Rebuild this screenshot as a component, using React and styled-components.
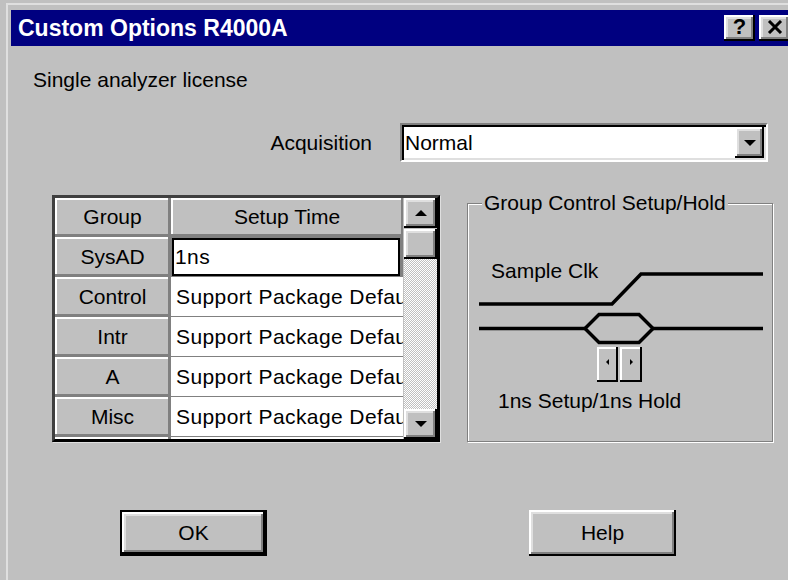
import React from 'react';
import styled, { createGlobalStyle, css } from 'styled-components';

const GlobalStyle = createGlobalStyle`
  html, body {
    margin: 0;
    padding: 0;
    background: #c0c0c0;
    overflow: hidden;
  }
  body {
    font-family: "Liberation Sans", Arial, sans-serif;
    font-size: 21px;
    color: #000;
  }
`;

// classic 3d bevels
const raised = css`
  background: #c0c0c0;
  box-shadow: inset -2px -2px 0 #000, inset 2px 2px 0 #fff, inset -4px -4px 0 #808080,
    inset 4px 4px 0 #dfdfdf;
`;

const raisedSoft = css`
  background: #c0c0c0;
  box-shadow: inset -2px -2px 0 #808080, inset 2px 2px 0 #fff;
`;

const Window = styled.div`
  padding: 3px 0 0 6px;
  height: 580px;
  box-sizing: border-box;
  overflow: hidden;
`;

const Frame = styled.div`
  width: 800px;
  height: 570px;
  border-top: 2px solid #dfdfdf;
  border-left: 2px solid #dfdfdf;
  padding: 5px 0 0 3px;
`;

const TitleBar = styled.div`
  width: 783px;
  height: 36px;
  box-sizing: border-box;
  background: #000080;
  display: flex;
  align-items: center;
  padding: 0 4px 0 7px;
`;

const Title = styled.div`
  color: #fff;
  font-weight: bold;
  font-size: 23px;
  line-height: 26px;
`;

const CaptionButtons = styled.div`
  margin-left: auto;
  display: flex;
  gap: 4px;
`;

const CaptionButton = styled.div`
  ${raised};
  width: 31px;
  height: 26px;
  display: flex;
  align-items: center;
  justify-content: center;
  font-weight: bold;
  font-size: 22px;
  line-height: 1;
  padding-bottom: 2px;
  box-sizing: border-box;
`;

const Body = styled.div`
  width: 783px;
  padding-top: 22px;
`;

const Text = styled.div`
  line-height: 24px;
  white-space: nowrap;
`;

const LicenseText = styled(Text)`
  margin-left: 22px;
`;

const AcquisitionRow = styled.div`
  display: flex;
  justify-content: flex-end;
  align-items: center;
  gap: 28px;
  margin-top: 31px;
  padding-right: 26px;
`;

const Combo = styled.div`
  width: 368px;
  height: 39px;
  box-sizing: border-box;
  border: 2px solid;
  border-color: #808080 #fff #fff #808080;
  box-shadow: inset 2px 2px 0 #000, inset -2px -2px 0 #dfdfdf;
  background: #fff;
  padding: 2px;
  display: flex;
`;

const ComboValue = styled.div`
  flex: 1;
  padding-left: 1px;
  line-height: 31px;
`;

const DropButton = styled.div`
  ${raised};
  width: 29px;
  display: flex;
  align-items: center;
  justify-content: center;
`;

const Arrow = styled.span`
  width: 0;
  height: 0;
  border-style: solid;
  border-color: transparent;
  ${({ $dir, $size = 6 }) => {
    if ($dir === 'up') return css`border-width: 0 ${$size}px ${$size}px; border-bottom-color: #000;`;
    if ($dir === 'left') return css`border-width: ${$size}px ${$size}px ${$size}px 0; border-right-color: #000;`;
    if ($dir === 'right') return css`border-width: ${$size}px 0 ${$size}px ${$size}px; border-left-color: #000;`;
    return css`border-width: ${$size}px ${$size}px 0; border-top-color: #000;`;
  }}
`;

const MainRow = styled.div`
  display: flex;
  align-items: flex-start;
  gap: 27px;
  padding-left: 41px;
  margin-top: 29px;
`;

const Table = styled.div`
  margin-top: 4px;
  width: 388px;
  height: 247px;
  box-sizing: border-box;
  border: 3px solid;
  border-color: #404040 #000 #000 #404040;
  box-shadow: 1px 1px 0 #dfdfdf;
  display: flex;
  background: #c0c0c0;
`;

const Grid = styled.div`
  width: 348px;
  height: 100%;
  overflow: hidden;
  display: grid;
  grid-template-columns: 115px 232px;
  grid-template-rows: 38px;
  grid-auto-rows: 39px;
  gap: 1px;
  align-content: start;
  background: #808080;
`;

const HeadCell = styled.div`
  ${raisedSoft};
  display: flex;
  align-items: center;
  justify-content: center;
  white-space: nowrap;
`;

// the Setup Time column is narrower than its text, so values are clipped
const ValueCell = styled.div`
  background: #fff;
  display: flex;
  align-items: center;
  white-space: nowrap;
  overflow: hidden;
  padding-left: 5px;
  letter-spacing: 0.4px;
  ${({ $focused }) =>
    $focused &&
    css`
      border: 2px solid #000;
      margin: 1px 3px 0 1px;
      padding-left: 1px;
    `}
`;

const ScrollBar = styled.div`
  flex: 1;
  display: flex;
  flex-direction: column;
  padding-left: 1px;
`;

const ScrollButton = styled.div`
  ${raised};
  height: 30px;
  display: flex;
  align-items: center;
  justify-content: center;
`;

const Thumb = styled.div`
  ${raised};
  height: 30px;
  margin-top: 1px;
`;

const Track = styled.div`
  flex: 1;
  background: repeating-conic-gradient(#fff 0 25%, #c0c0c0 0 50%) 0 0 / 2px 2px;
`;

const GroupBox = styled.fieldset`
  margin: 0;
  padding: 0;
  min-width: 0;
  width: 306px;
  height: 251px;
  box-sizing: border-box;
  border: 1px solid #808080;
  box-shadow: inset 1px 1px 0 #fff, 1px 1px 0 #fff;
`;

const Legend = styled.legend`
  margin-left: 14px;
  padding: 0 2px;
  line-height: 24px;
  background: #c0c0c0;
`;

const ClockLabel = styled(Text)`
  margin: 44px 0 0 23px;
`;

const Waveform = styled.svg`
  display: block;
  margin-top: -13px;
`;

const Spinner = styled.div`
  display: flex;
  gap: 2px;
  margin: 1px 0 0 129px;
`;

const SpinButton = styled.div`
  width: ${({ $w }) => $w}px;
  height: 35px;
  box-sizing: border-box;
  background: #c0c0c0;
  box-shadow: inset -2px -2px 0 #000, inset 2px 2px 0 #fff;
  display: flex;
  align-items: center;
  justify-content: center;
  padding-bottom: 6px;
`;

const HoldCaption = styled(Text)`
  margin: 7px 0 0 30px;
`;

const ButtonRow = styled.div`
  display: flex;
  gap: 262px;
  padding-left: 109px;
  margin-top: 68px;
`;

const PushButton = styled.div`
  ${raised};
  width: 147px;
  height: 46px;
  box-sizing: border-box;
  display: flex;
  align-items: center;
  justify-content: center;
  ${({ $default }) =>
    $default &&
    css`
      border: 2px solid #000;
    `}
`;

const rows = [
  { group: 'SysAD', value: '1ns', focused: true },
  { group: 'Control', value: 'Support Package Default' },
  { group: 'Intr', value: 'Support Package Default' },
  { group: 'A', value: 'Support Package Default' },
  { group: 'Misc', value: 'Support Package Default' },
  { group: '', value: '' },
];

export default function App() {
  return (
    <>
      <GlobalStyle />
      <Window>
        <Frame>
          <TitleBar>
            <Title>Custom Options R4000A</Title>
            <CaptionButtons>
              <CaptionButton>?</CaptionButton>
              <CaptionButton>
                <svg width="16" height="14" viewBox="0 0 16 14">
                  <path d="M2 1 L14 13 M14 1 L2 13" stroke="#000" strokeWidth="3" />
                </svg>
              </CaptionButton>
            </CaptionButtons>
          </TitleBar>

          <Body>
            <LicenseText>Single analyzer license</LicenseText>

            <AcquisitionRow>
              <Text>Acquisition</Text>
              <Combo>
                <ComboValue>Normal</ComboValue>
                <DropButton>
                  <Arrow $dir="down" />
                </DropButton>
              </Combo>
            </AcquisitionRow>

            <MainRow>
              <Table>
                <Grid>
                  <HeadCell>Group</HeadCell>
                  <HeadCell>Setup Time</HeadCell>
                  {rows.map((r, i) => (
                    <React.Fragment key={i}>
                      <HeadCell>{r.group}</HeadCell>
                      <ValueCell $focused={r.focused}>{r.value}</ValueCell>
                    </React.Fragment>
                  ))}
                </Grid>
                <ScrollBar>
                  <ScrollButton>
                    <Arrow $dir="up" />
                  </ScrollButton>
                  <Thumb />
                  <Track />
                  <ScrollButton>
                    <Arrow $dir="down" />
                  </ScrollButton>
                </ScrollBar>
              </Table>

              <GroupBox>
                <Legend>Group Control Setup/Hold</Legend>
                <ClockLabel>Sample Clk</ClockLabel>
                <Waveform width="304" height="76" viewBox="0 0 304 76">
                  <polyline
                    points="11,34 144,34 173,4 295,4"
                    fill="none"
                    stroke="#000"
                    strokeWidth="3.5"
                  />
                  <polyline points="11,58.5 117,58.5" stroke="#000" strokeWidth="3.5" />
                  <polyline points="185,58.5 295,58.5" stroke="#000" strokeWidth="3.5" />
                  <polygon
                    points="117,58.5 131,44.5 171,44.5 185,58.5 171,72.5 131,72.5"
                    fill="none"
                    stroke="#000"
                    strokeWidth="3.5"
                  />
                </Waveform>
                <Spinner>
                  <SpinButton $w={21}>
                    <Arrow $dir="left" $size={3} />
                  </SpinButton>
                  <SpinButton $w={22}>
                    <Arrow $dir="right" $size={3} />
                  </SpinButton>
                </Spinner>
                <HoldCaption>1ns Setup/1ns Hold</HoldCaption>
              </GroupBox>
            </MainRow>

            <ButtonRow>
              <PushButton $default>OK</PushButton>
              <PushButton>Help</PushButton>
            </ButtonRow>
          </Body>
        </Frame>
      </Window>
    </>
  );
}
